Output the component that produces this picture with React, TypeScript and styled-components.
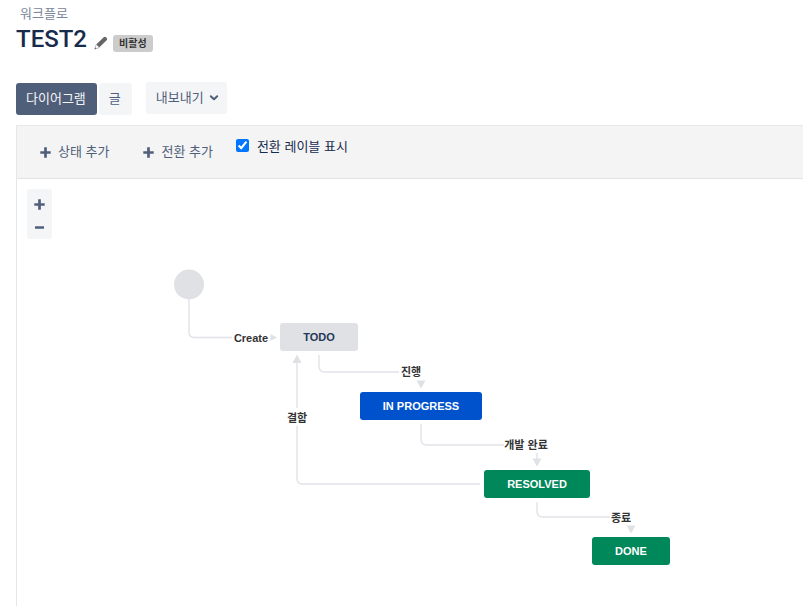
import React, { useState } from "react";
import styled, { createGlobalStyle } from "styled-components";

const GlobalStyle = createGlobalStyle`
  * { box-sizing: border-box; }
  html, body, #root { height: 100%; }
  body {
    margin: 0;
    background: #fff;
    color: #172b4d;
    font-family: "Liberation Sans", "Noto Sans CJK KR", sans-serif;
    font-size: 13px;
    line-height: 20px;
    overflow: hidden;
  }
`;

const Page = styled.div`
  display: flex;
  flex-direction: column;
  min-height: 100%;
  padding: 4px 0 0 16px;
`;

const Crumb = styled.a`
  align-self: flex-start;
  margin-left: 4px;
  color: #7a869a;
  text-decoration: none;
`;

const TitleRow = styled.header`
  display: flex;
  align-items: center;
  height: 30px;
`;

const Title = styled.h1`
  margin: 0;
  color: #172b4d;
  font: 500 24px/30px Roboto, sans-serif;
`;

const EditButton = styled.button`
  display: flex;
  margin: 8px 0 0 7px;
  padding: 0;
  border: 0;
  background: none;
`;

const Lozenge = styled.span`
  margin: 8px 0 0 5px;
  padding: 0 6px;
  border-radius: 3px;
  background: #ccc;
  color: #333;
  font-size: 10px;
  font-weight: 700;
  line-height: 17px;
`;

const Actions = styled.nav`
  display: flex;
  align-items: flex-start;
  gap: 2px;
  height: 43px;
  margin-top: 28px;
`;

const Button = styled.button<{ $active?: boolean }>`
  display: flex;
  align-items: center;
  gap: 5px;
  height: 32px;
  margin-top: 1px;
  padding: 0 11px 0 10px;
  border: 0;
  border-radius: 3px;
  background: ${(p) => (p.$active ? "#505f79" : "#f4f5f7")};
  color: ${(p) => (p.$active ? "#f4f5f7" : "#505f79")};
  font: inherit;
`;

const ExportButton = styled(Button)`
  margin: 0 0 0 12px;
  padding-right: 8px;
`;

const Workspace = styled.main`
  display: flex;
  flex: 1;
  flex-direction: column;
  border-top: 1px solid #e6e7e9;
  border-left: 1px solid #e6e7e9;
`;

const Toolbar = styled.div`
  display: flex;
  align-items: flex-start;
  height: 53px;
  padding: 11px 23px;
  border-bottom: 1px solid #e3e4e6;
  background: #f4f4f5;
`;

const ToolButton = styled.button`
  display: flex;
  align-items: center;
  gap: 7px;
  height: 30px;
  margin-right: 34px;
  padding: 0;
  border: 0;
  background: none;
  color: #505f79;
  font: inherit;

  &:last-of-type { margin-right: 23px; }
`;

const CheckLabel = styled.label`
  display: flex;
  align-items: center;
  gap: 8px;
`;

const Checkbox = styled.input`
  width: 13px;
  height: 13px;
  margin: 0 0 3px;
  accent-color: #0075ff;
`;

const Canvas = styled.section`
  position: relative;
  flex: 1;
`;

const Zoom = styled.div`
  display: flex;
  flex-direction: column;
  width: 25px;
  margin: 10px;
  padding: 3px 0 0;
  border-radius: 3px;
  background: #f4f5f7;
`;

const ZoomButton = styled.button`
  display: flex;
  align-items: center;
  justify-content: center;
  height: 24px;
  padding: 0;
  border: 0;
  background: none;

  & + & { height: 23px; }
`;

const Edges = styled.svg`
  position: absolute;
  top: 0;
  left: 0;
  fill: none;
  stroke: #e2e3e8;
  stroke-width: 1.4;
`;

type Tone = "todo" | "progress" | "done";
const fills: Record<Tone, string> = { todo: "#dfe1e5", progress: "#0052cc", done: "#00875a" };

const Status = styled.button<{ $x: number; $y: number; $w: number; $tone: Tone }>`
  position: absolute;
  left: ${(p) => p.$x}px;
  top: ${(p) => p.$y}px;
  width: ${(p) => p.$w}px;
  height: 28px;
  padding: 0;
  border: 0;
  border-radius: 3px;
  background: ${(p) => fills[p.$tone]};
  color: ${(p) => (p.$tone === "todo" ? "#253858" : "#fff")};
  font: inherit;
  font-size: 11px;
  font-weight: 700;
`;

const EdgeLabel = styled.span<{ $x: number; $y: number }>`
  position: absolute;
  left: ${(p) => p.$x}px;
  top: ${(p) => p.$y}px;
  transform: translate(-50%, -50%);
  color: #333;
  font-size: 11px;
  font-weight: 700;
  line-height: 16px;
  white-space: nowrap;
`;

const statuses: { name: string; x: number; y: number; w: number; tone: Tone }[] = [
  { name: "TODO", x: 263, y: 144, w: 78, tone: "todo" },
  { name: "IN PROGRESS", x: 343, y: 213, w: 122, tone: "progress" },
  { name: "RESOLVED", x: 467, y: 291, w: 106, tone: "done" },
  { name: "DONE", x: 575, y: 358, w: 78, tone: "done" },
];

const transitions = [
  { name: "Create", x: 234, y: 159, path: "M172 120V153Q172 158.500 177 158.500H215", head: "M253.500 155L260 158.500L253.500 162Z" },
  { name: "진행", x: 394, y: 193, path: "M302 176V187Q302 193 308 193H382", head: "M399.500 201.500H408.500L404 209.500Z" },
  { name: "개발 완료", x: 509, y: 266, path: "M404 245V260Q404 266 410 266H487M520 274V280", head: "M515.500 279.500H524.500L520 287.500Z" },
  { name: "종료", x: 604, y: 339, path: "M520 323V332Q520 338 526 338H593", head: "M609.500 346.500H618.500L614 354.500Z" },
  { name: "결함", x: 280, y: 239, path: "M463 305H285Q280 305 280 299V247M280 229V184", head: "M275.500 184H284.500L280 175.500Z" },
];

const Plus = () => (
  <svg width="11" height="11" viewBox="0 0 11 11" aria-hidden="true">
    <path d="M5.500 .3V10.700M.3 5.500H10.700" fill="none" stroke="#505f79" strokeWidth="2.700" />
  </svg>
);

const Minus = () => (
  <svg width="11" height="11" viewBox="0 0 11 11" aria-hidden="true">
    <path d="M1 5.500H10" fill="none" stroke="#505f79" strokeWidth="2.500" />
  </svg>
);

const Pencil = () => (
  <svg width="14" height="14" viewBox="0 0 14 14" aria-hidden="true">
    <path d="M2.200 8.600L9.700 1.300Q10.900.2 12 1.300L12.700 2Q13.700 3 12.700 4.200L5.200 11.600Z" fill="#666" />
    <path d="M2.200 8.700L.8 13L5.200 11.600" fill="#fff" stroke="#999" strokeWidth=".7" />
    <path d="M.6 13.300L1.200 11.600L2.400 12.700Z" fill="#666" />
  </svg>
);

const Chevron = () => (
  <svg width="10" height="10" viewBox="0 0 10 10" aria-hidden="true">
    <path d="M1.800 3.200L5 6.300L8.200 3.200" fill="none" stroke="#505f79" strokeWidth="2" strokeLinecap="round" strokeLinejoin="round" />
  </svg>
);

export default function App() {
  const [labels, setLabels] = useState(true);
  return (
    <>
      <GlobalStyle />
      <Page>
        <Crumb href="#workflows">워크플로</Crumb>
        <TitleRow>
          <Title>TEST2</Title>
          <EditButton aria-label="편집"><Pencil /></EditButton>
          <Lozenge>비활성</Lozenge>
        </TitleRow>
        <Actions>
          <Button $active>다이어그램</Button>
          <Button>글</Button>
          <ExportButton>내보내기<Chevron /></ExportButton>
        </Actions>
        <Workspace>
          <Toolbar>
            <ToolButton><Plus />상태 추가</ToolButton>
            <ToolButton><Plus />전환 추가</ToolButton>
            <CheckLabel>
              <Checkbox type="checkbox" checked={labels} onChange={(e) => setLabels(e.target.checked)} />
              전환 레이블 표시
            </CheckLabel>
          </Toolbar>
          <Canvas>
            <Zoom>
              <ZoomButton aria-label="확대"><Plus /></ZoomButton>
              <ZoomButton aria-label="축소"><Minus /></ZoomButton>
            </Zoom>
            <Edges width="660" height="400" aria-hidden="true">
              <circle cx="172" cy="105.500" r="15" fill="#dfe1e5" stroke="none" />
              {transitions.map((t) => (
                <g key={t.name}>
                  <path d={t.path} />
                  <path d={t.head} fill="#dfe1e5" stroke="none" />
                </g>
              ))}
            </Edges>
            {statuses.map((s) => (
              <Status key={s.name} $x={s.x} $y={s.y} $w={s.w} $tone={s.tone}>{s.name}</Status>
            ))}
            {labels && transitions.map((t) => (
              <EdgeLabel key={t.name} $x={t.x} $y={t.y}>{t.name}</EdgeLabel>
            ))}
          </Canvas>
        </Workspace>
      </Page>
    </>
  );
}
